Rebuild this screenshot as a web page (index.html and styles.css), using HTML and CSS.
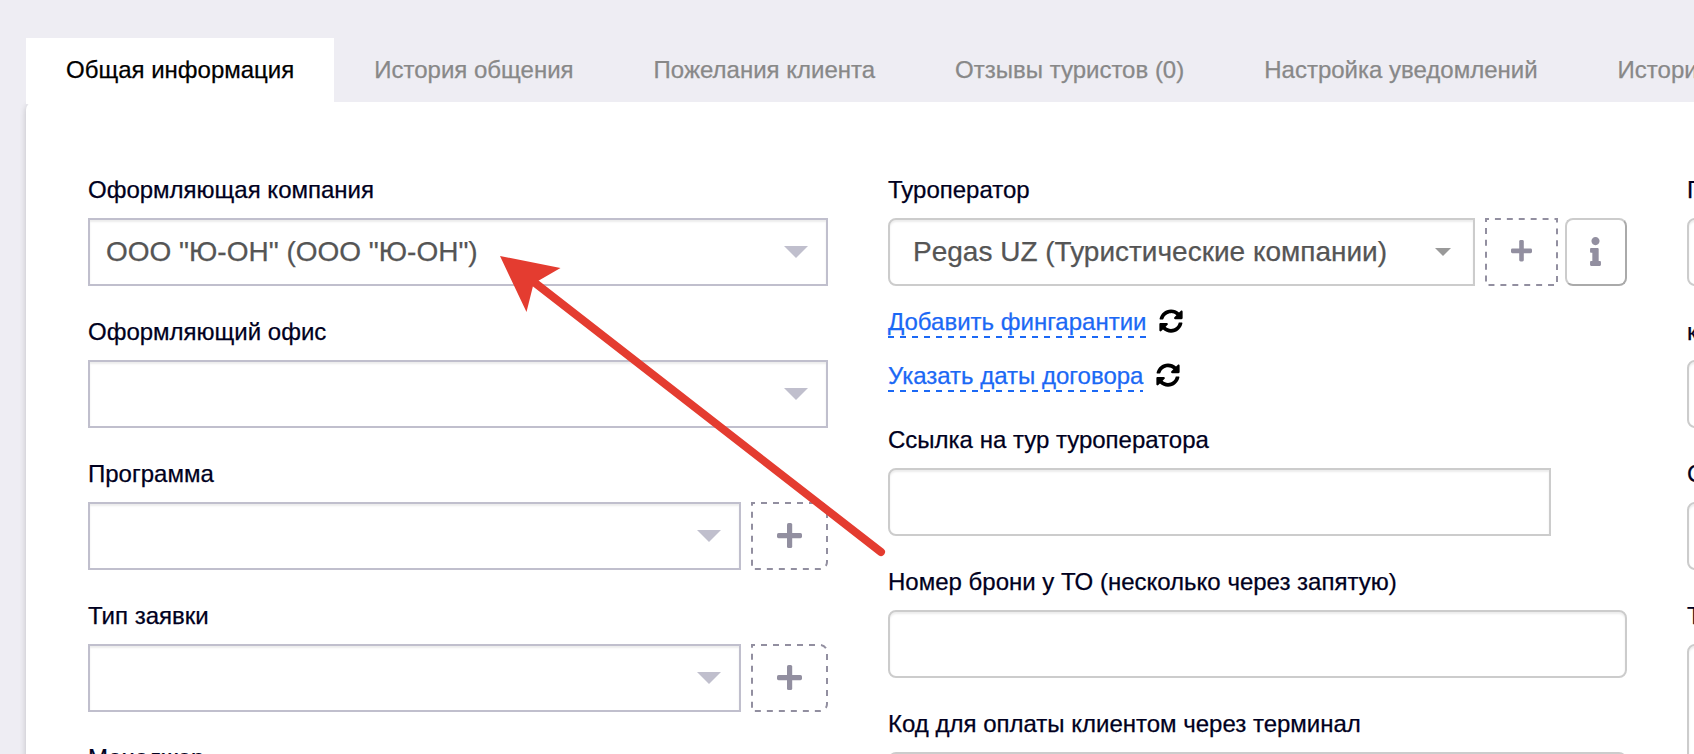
FILE: index.html
```
<!DOCTYPE html>
<html lang="ru">
<head>
    <meta charset="UTF-8">
    <meta name="viewport" content="width=device-width, initial-scale=1.0">
    <title>Общая информация</title>
    <link rel="stylesheet" href="styles.css">
</head>
<body>
    <svg class="sprite">
        <symbol id="add" viewBox="0 0 77 68">
            <path class="dash" d="M1 1H69a7 7 0 0 1 7 7V60a7 7 0 0 1-7 7H1Z"/>
            <rect x="36" y="21" width="5.2" height="25" rx="1.6"/>
            <rect x="26" y="31" width="25" height="5.2" rx="1.6"/>
        </symbol>
        <symbol id="add-small" viewBox="0 0 73 68">
            <path class="dash" pathLength="276" d="M1 1H72V67H1Z"/>
            <rect x="34.2" y="22" width="4.6" height="21.5" rx="1.4"/>
            <rect x="26" y="30.6" width="21" height="4.6" rx="1.4"/>
        </symbol>
        <symbol id="info" viewBox="0 0 192 512">
            <path d="M20 424.229h20V279.771H20c-11.046 0-20-8.954-20-20V212c0-11.046 8.954-20 20-20h112c11.046 0 20 8.954 20 20v212.229h20c11.046 0 20 8.954 20 20V492c0 11.046-8.954 20-20 20H20c-11.046 0-20-8.954-20-20v-47.771c0-11.046 8.954-20 20-20zM96 0C56.235 0 24 32.235 24 72s32.235 72 72 72 72-32.235 72-72S135.764 0 96 0z"/>
        </symbol>
        <symbol id="refresh" viewBox="0 0 512 512">
            <path d="M370.72 133.28C339.458 104.008 298.888 87.962 255.848 88c-77.458.068-144.328 53.178-162.791 126.85-1.344 5.363-6.122 9.15-11.651 9.15H24.103c-7.498 0-13.194-6.807-11.807-14.176C33.933 94.924 134.813 8 256 8c66.448 0 126.791 26.136 171.315 68.685L463.03 40.97C478.149 25.851 504 36.559 504 57.941V192c0 13.255-10.745 24-24 24H345.941c-21.382 0-32.09-25.851-16.971-40.971l41.75-41.749zM32 296h134.059c21.382 0 32.09 25.851 16.971 40.971l-41.75 41.75c31.262 29.273 71.835 45.319 114.876 45.28 77.418-.07 144.315-53.144 162.787-126.849 1.344-5.363 6.122-9.15 11.651-9.15h57.304c7.498 0 13.194 6.807 11.807 14.176C478.067 417.076 377.187 504 256 504c-66.448 0-126.791-26.136-171.315-68.685L48.97 471.03C33.851 486.149 8 475.441 8 454.059V320c0-13.255 10.745-24 24-24z"/>
        </symbol>
    </svg>

    <div class="tabs">
        <a class="tab active">Общая информация</a>
        <a class="tab">История общения</a>
        <a class="tab">Пожелания клиента</a>
        <a class="tab">Отзывы туристов (0)</a>
        <a class="tab">Настройка уведомлений</a>
        <a class="tab">История</a>
    </div>

    <div class="card">
        <div class="column">
            <div class="form-group">
                <label>Оформляющая компания</label>
                <div class="field select">ООО "Ю-ОН" (ООО "Ю-ОН")</div>
            </div>
            <div class="form-group">
                <label>Оформляющий офис</label>
                <div class="field select"></div>
            </div>
            <div class="form-group">
                <label>Программа</label>
                <div class="row">
                    <div class="field select"></div>
                    <button class="btn-add"><svg><use href="#add"/></svg></button>
                </div>
            </div>
            <div class="form-group">
                <label>Тип заявки</label>
                <div class="row">
                    <div class="field select"></div>
                    <button class="btn-add"><svg><use href="#add"/></svg></button>
                </div>
            </div>
            <div class="form-group">
                <label>Менеджер</label>
            </div>
        </div>

        <div class="column">
            <div class="form-group operator">
                <label>Туроператор</label>
                <div class="row">
                    <div class="field input dropdown">Pegas UZ (Туристические компании)</div>
                    <button class="btn-add small"><svg><use href="#add-small"/></svg></button>
                    <button class="btn-info"><svg class="icon-info"><use href="#info"/></svg></button>
                </div>
            </div>
            <div class="link-row">
                <a class="link">Добавить фингарантии</a>
                <svg class="icon-refresh"><use href="#refresh"/></svg>
            </div>
            <div class="link-row">
                <a class="link">Указать даты договора</a>
                <svg class="icon-refresh"><use href="#refresh"/></svg>
            </div>
            <div class="form-group">
                <label>Ссылка на тур туроператора</label>
                <div class="field input tour-link"></div>
            </div>
            <div class="form-group">
                <label>Номер брони у ТО (несколько через запятую)</label>
                <div class="field input"></div>
            </div>
            <div class="form-group">
                <label>Код для оплаты клиентом через терминал</label>
                <div class="field input"></div>
            </div>
        </div>

        <div class="column">
            <div class="form-group">
                <label>П</label>
                <div class="field input"></div>
            </div>
            <div class="form-group">
                <label>к</label>
                <div class="field input"></div>
            </div>
            <div class="form-group">
                <label>С</label>
                <div class="field input"></div>
            </div>
            <div class="form-group">
                <label>Т</label>
                <div class="field input textarea"></div>
            </div>
        </div>
    </div>

    <!-- Стрелка-указатель поверх формы -->
    <svg class="pointer" viewBox="0 0 400 310">
        <path class="pointer-line" d="M30 23L381 296"/>
        <path class="pointer-head" d="M0 0L60.5 12L38 25L33 30L26.5 56Z"/>
    </svg>
</body>
</html>
```
FILE: styles.css
```
* {
    box-sizing: border-box;
}

body {
    margin: 0;
    height: 754px;
    overflow: hidden;
    position: relative;
    padding: 38px 0 0 26px;
    background-color: #eeedf3;
    font-family: "Liberation Sans", Arial, sans-serif;
    font-size: 24px;
    color: #000020;
    -webkit-text-stroke: 0.25px;
}

.sprite {
    display: none;
}

/* Tabs */
.tabs {
    display: flex;
    position: relative;
    z-index: 1;
    height: 64px;
    background-color: #eeedf3;
}

.tab {
    flex: none;
    height: 64px;
    padding: 0 40px;
    line-height: 63px;
    color: #888;
    white-space: nowrap;
}

.tab.active {
    height: 66px;
    background-color: #fff;
    color: #000;
}

/* Card */
.card {
    display: flex;
    gap: 60px;
    width: 2400px;
    height: 720px;
    padding: 74px 62px 0;
    background-color: #fff;
    border-radius: 8px;
    box-shadow: 0 2px 6px rgba(0, 0, 0, 0.2);
}

.column {
    flex: none;
    width: 740px;
}

.column + .column {
    width: 739px;
}

.form-group {
    margin-bottom: 32px;
}

label {
    display: block;
    height: 42px;
    line-height: 28px;
    white-space: nowrap;
}

.row {
    display: flex;
}

.row .field {
    flex: 1;
}

/* Fields */
.field {
    display: flex;
    align-items: center;
    height: 68px;
    padding: 0 18px 0 16px;
    border: 2px solid #c0bfcd;
    box-shadow: inset 0 2px 2px rgba(0, 0, 0, 0.075);
    background-color: #fff;
    font-size: 28px;
    color: #555;
    white-space: nowrap;
}

.select::after {
    content: "";
    margin-left: auto;
    border: 12px solid transparent;
    border-top-color: #c0bfcd;
    border-bottom: none;
}

.input {
    border-color: #ccc;
    border-radius: 8px;
}

.dropdown {
    padding: 0 22px 0 23px;
    border-radius: 8px 0 0 8px;
}

.dropdown::after {
    content: "";
    margin-left: auto;
    border: 8px solid transparent;
    border-top-color: #999;
    border-bottom: none;
}

.tour-link {
    width: 663px;
    border-radius: 8px 0 0 8px;
}

.textarea {
    height: 200px;
}

/* Buttons */
button {
    display: flex;
    flex: none;
    align-items: center;
    justify-content: center;
    height: 68px;
    padding: 0;
    background-color: #fff;
    color: #928fa0;
}

svg {
    fill: currentColor;
}

.btn-add {
    width: 77px;
    margin-left: 10px;
    border: none;
}

.btn-add.small {
    width: 73px;
}

.btn-add svg {
    width: 100%;
    height: 68px;
}

.dash {
    fill: none;
    stroke: currentColor;
    stroke-width: 2;
    stroke-dasharray: 6 6;
    stroke-dashoffset: 3;
}

.btn-info {
    width: 62px;
    margin-left: 7px;
    border: 2px solid #ccc;
    border-right-color: #aaa;
    border-bottom-color: #aaa;
    border-radius: 8px;
}

.icon-info {
    width: 11px;
    height: 29px;
    margin-right: 2px;
    margin-bottom: 1px;
}

/* Links */
.operator {
    margin-bottom: 22px;
}

.link-row {
    display: flex;
    align-items: flex-start;
    gap: 13px;
    height: 54px;
}

.link {
    height: 30px;
    line-height: 28px;
    background: repeating-linear-gradient(90deg, #1b68f5 0 6px, transparent 6px 12px) left bottom / 100% 2px no-repeat;
    color: #1b68f5;
    white-space: nowrap;
}

.icon-refresh {
    width: 24px;
    height: 24px;
    margin-top: 1px;
    color: #000;
}

.link-row + .form-group {
    margin-top: 10px;
}

/* Pointer */
.pointer {
    position: absolute;
    left: 500px;
    top: 256px;
    width: 400px;
    height: 310px;
}

.pointer-line {
    stroke: #e43c30;
    stroke-width: 8;
    stroke-linecap: round;
}

.pointer-head {
    fill: #e43c30;
}
```
